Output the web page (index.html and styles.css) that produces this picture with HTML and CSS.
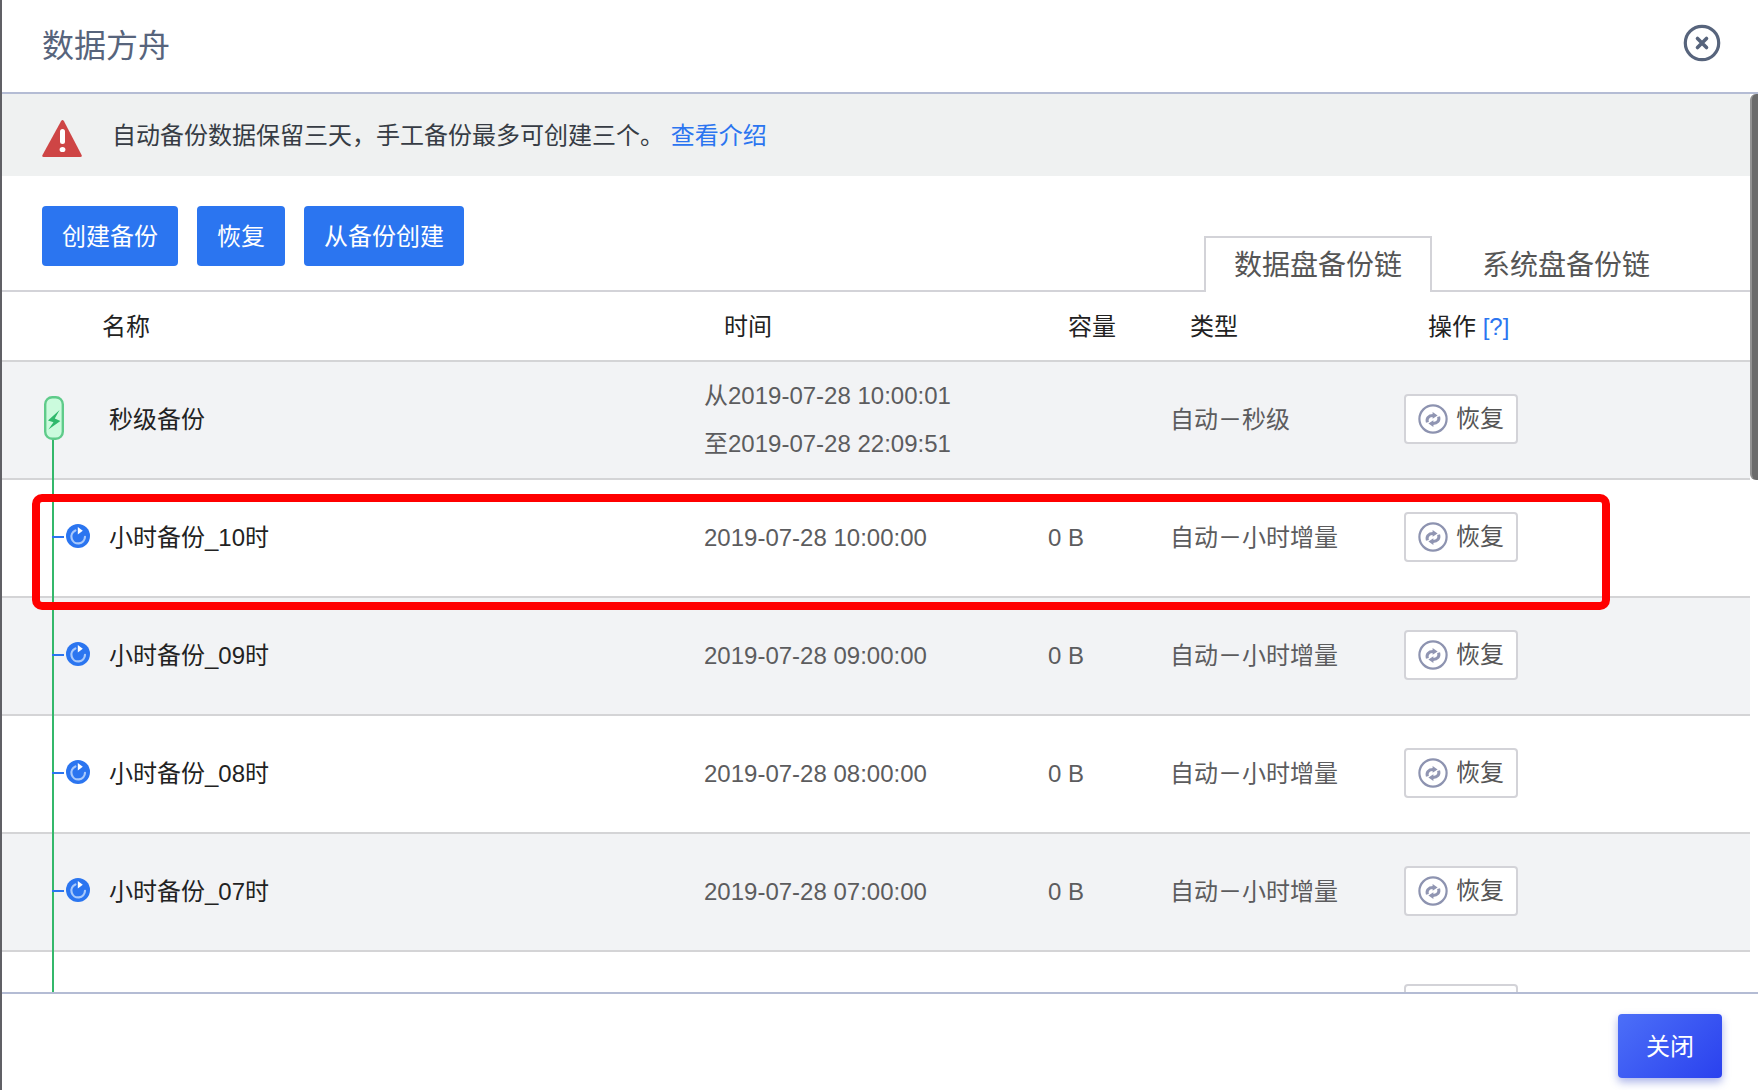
FILE: index.html
```html
<!DOCTYPE html>
<html lang="zh-CN">
<head>
<meta charset="utf-8">
<meta name="viewport" content="width=device-width, initial-scale=1">
<title>数据方舟</title>
<link rel="stylesheet" href="styles.css">
</head>
<body>
<svg class="sprite" aria-hidden="true">
  <symbol id="i-restore" viewBox="0 0 30 30">
    <circle cx="15" cy="15" r="13.6" fill="none" stroke="#8d93b0" stroke-width="2.2"/>
    <path d="M9.4 18.4c-1.2-4 1.2-6.8 5.6-6.8M20.6 12.6c1.2 4-1.2 6.8-5.6 6.8" fill="none" stroke="#9095b2" stroke-width="3"/>
    <path d="M14.6 8l5 3.6-5 3.2zM15.4 16.2l-5 3.2 5 3.6z" fill="#9095b2"/>
  </symbol>
  <symbol id="i-hour" viewBox="0 0 24 24">
    <circle cx="12" cy="12" r="12" fill="#2b75f0"/>
    <path d="M9.4 6.4A6.8 6.8 0 1 0 19 12.8" fill="none" stroke="#a9c9fb" stroke-width="2.2" stroke-linecap="round"/>
    <path d="M11.8 3l5 3.8-5 3.8z" fill="#fff"/>
  </symbol>
</svg>
<main class="dialog">
  <header class="dialog-head">
    <h1 class="dialog-title">数据方舟</h1>
    <button class="icon-close" type="button" aria-label="关闭窗口">
      <svg width="38" height="38" viewBox="0 0 38 38"><circle cx="19" cy="19" r="16.7" fill="none" stroke="#57647c" stroke-width="3.2"/><path d="M14.5 14.5l9 9M23.5 14.5l-9 9" stroke="#57647c" stroke-width="3.6" stroke-linecap="round"/></svg>
    </button>
  </header>

  <div class="dialog-body">
    <div class="content">
      <p class="notice">
        <svg class="notice-icon" width="40" height="40" viewBox="0 0 40 40"><path d="M19 2.2q1.5-2.4 3 0L39.6 36q.8 2-1.4 2H1.6Q-.4 38 .5 36z" fill="#ce4545"/><rect x="18" y="10" width="5" height="15" rx="2.5" fill="#fff"/><ellipse cx="20.5" cy="30.5" rx="2.9" ry="2.6" fill="#fff"/></svg>
        <span>自动备份数据保留三天，手工备份最多可创建三个。 <a class="link" href="#intro">查看介绍</a></span>
      </p>

      <div class="toolbar">
        <div class="actions">
          <button class="btn" type="button">创建备份</button>
          <button class="btn" type="button">恢复</button>
          <button class="btn" type="button">从备份创建</button>
        </div>
        <div class="tabs" role="tablist">
          <button class="tab tab-active" type="button" role="tab" aria-selected="true">数据盘备份链</button>
          <button class="tab" type="button" role="tab" aria-selected="false">系统盘备份链</button>
        </div>
      </div>

      <table class="backups">
        <colgroup><col><col class="col-time"><col class="col-size"><col class="col-type"><col class="col-ops"></colgroup>
        <thead>
          <tr><th class="th-name">名称</th><th>时间</th><th>容量</th><th>类型</th><th>操作 <a class="link" href="#help">[?]</a></th></tr>
        </thead>
        <tbody>
          <tr class="first">
            <td class="chain"><div class="name name-second"><svg width="20" height="44" viewBox="0 0 20 44"><rect x="1.2" y="1.2" width="17.6" height="41.6" rx="7" fill="#cbfbdd" stroke="#5fcb8a" stroke-width="2.4"/><path d="M15.6 14L4 24.5l5.5 1.8L4.4 33.5 16.4 25l-5.6-2.6z" fill="#2fb96c"/></svg>秒级备份</div></td>
            <td>从2019-07-28 10:00:01<br>至2019-07-28 22:09:51</td>
            <td></td>
            <td>自动－秒级</td>
            <td class="ops"><button class="restore" type="button"><svg width="30" height="30"><use href="#i-restore"/></svg>恢复</button></td>
          </tr>
          <tr>
            <td class="chain"><div class="name name-hour"><svg width="24" height="24"><use href="#i-hour"/></svg>小时备份_10时</div></td>
            <td>2019-07-28 10:00:00</td>
            <td>0 B</td>
            <td>自动－小时增量</td>
            <td class="ops"><button class="restore" type="button"><svg width="30" height="30"><use href="#i-restore"/></svg>恢复</button><span class="frame"></span></td>
          </tr>
          <tr>
            <td class="chain"><div class="name name-hour"><svg width="24" height="24"><use href="#i-hour"/></svg>小时备份_09时</div></td>
            <td>2019-07-28 09:00:00</td>
            <td>0 B</td>
            <td>自动－小时增量</td>
            <td class="ops"><button class="restore" type="button"><svg width="30" height="30"><use href="#i-restore"/></svg>恢复</button></td>
          </tr>
          <tr>
            <td class="chain"><div class="name name-hour"><svg width="24" height="24"><use href="#i-hour"/></svg>小时备份_08时</div></td>
            <td>2019-07-28 08:00:00</td>
            <td>0 B</td>
            <td>自动－小时增量</td>
            <td class="ops"><button class="restore" type="button"><svg width="30" height="30"><use href="#i-restore"/></svg>恢复</button></td>
          </tr>
          <tr>
            <td class="chain"><div class="name name-hour"><svg width="24" height="24"><use href="#i-hour"/></svg>小时备份_07时</div></td>
            <td>2019-07-28 07:00:00</td>
            <td>0 B</td>
            <td>自动－小时增量</td>
            <td class="ops"><button class="restore" type="button"><svg width="30" height="30"><use href="#i-restore"/></svg>恢复</button></td>
          </tr>
          <tr>
            <td class="chain"></td>
            <td></td>
            <td></td>
            <td></td>
            <td class="ops"><button class="restore restore-empty" type="button" aria-label="恢复"></button></td>
          </tr>
        </tbody>
      </table>
    </div>
    <div class="scrollbar"><div class="thumb"></div></div>
  </div>

  <footer class="dialog-foot">
    <button class="btn-close" type="button">关闭</button>
  </footer>
</main>
</body>
</html>
```
FILE: styles.css
```css
* { box-sizing: border-box; }

body {
  margin: 0;
  padding-left: 2px;
  background: #606065;
  font-family: "Liberation Sans", "Noto Sans CJK SC", sans-serif;
  font-size: 24px;
  color: #222;
}

button { font: inherit; cursor: pointer; }
svg { display: block; flex: none; }
.sprite { position: absolute; width: 0; height: 0; }
.link { color: #2b75f0; text-decoration: none; }

.dialog {
  display: flex;
  flex-direction: column;
  height: 100vh;
  background: #fff;
}

.dialog-head {
  display: flex;
  justify-content: space-between;
  align-items: flex-end;
  padding: 22px 37px 22px 40px;
  border-bottom: 2px solid #b4bcd4;
}
.dialog-title {
  margin: 0;
  font-size: 32px;
  font-weight: 400;
  line-height: 48px;
  color: #57647c;
}
.icon-close { padding: 0 0 8px; border: 0; background: none; }

.dialog-body {
  display: flex;
  flex: 1;
  min-height: 0;
}
.content {
  flex: 1;
  min-width: 0;
  overflow: hidden;
}
.scrollbar { width: 8px; }
.thumb {
  height: 43%;
  border-left: 2px solid #929292;
  border-radius: 6px 0 0 6px;
  background: #6b6b6b;
}

.notice {
  display: flex;
  align-items: center;
  gap: 30px;
  height: 82px;
  margin: 0;
  padding: 0 0 4px 40px;
  background: #eff1f1;
  color: #363c44;
}
.notice-icon { margin-top: 12px; }

.toolbar {
  display: flex;
  justify-content: space-between;
  align-items: flex-end;
  padding: 30px 70px 0 40px;
  border-bottom: 2px solid #d3d3d8;
}
.actions {
  display: flex;
  gap: 19px;
  padding-bottom: 24px;
}
.btn {
  height: 60px;
  padding: 0 20px 4px;
  border: 0;
  border-radius: 4px;
  background: #2b75f0;
  color: #fff;
}
.tabs {
  display: flex;
  gap: 20px;
  margin-bottom: -2px;
}
.tab {
  height: 56px;
  padding: 0 28px 4px;
  border: 2px solid transparent;
  border-bottom: 0;
  background: none;
  font-size: 28px;
  color: #555;
}
.tab-active {
  border-color: #d3d3d8;
  background: #fff;
}

.backups {
  width: 100%;
  table-layout: fixed;
  border-spacing: 0;
}
.col-time { width: 344px; }
.col-size { width: 122px; }
.col-type { width: 234px; }
.col-ops { width: 366px; }

.backups th {
  height: 70px;
  padding: 0 0 4px 40px;
  border-bottom: 2px solid #d4d4d6;
  font-weight: 400;
  text-align: left;
}
.backups .th-name { padding-left: 100px; }
.backups th:last-child { padding-left: 44px; }
.backups td {
  height: 118px;
  padding: 0 0 0 20px;
  border-bottom: 2px solid #d4d4d6;
  line-height: 48px;
  color: #5c5c5e;
}
.backups .ops { padding-bottom: 2px; }
.backups tbody tr { position: relative; }
.backups tbody tr:nth-child(odd) { background: #f2f3f5; }

/* the green line that links each backup to the next */
.backups .chain {
  position: relative;
  padding-left: 0;
  color: #222;
}
.chain::before {
  content: "";
  position: absolute;
  top: 0;
  bottom: -2px;
  left: 50px;
  width: 2px;
  background: #34b86b;
}
.first .chain::before { top: 78px; }

.name {
  position: relative;
  display: flex;
  align-items: center;
}
.name svg { margin-bottom: 4px; }
.name-second { gap: 45px; padding-left: 42px; }
.name-hour { gap: 19px; padding-left: 64px; }
.name-hour::before {
  content: "";
  position: absolute;
  top: 22px;
  left: 50px;
  width: 12px;
  height: 2px;
  background: #2b75f0;
}

/* highlight frame over the selected backup */
.frame {
  position: absolute;
  z-index: 2;
  top: 14px;
  right: 140px;
  bottom: -12px;
  left: 30px;
  border: 8px solid #f00;
  border-radius: 10px;
  pointer-events: none;
}

.restore {
  display: flex;
  align-items: center;
  gap: 8px;
  height: 50px;
  padding: 0 12px;
  border: 2px solid #d3d3d8;
  border-radius: 4px;
  background: #fff;
  color: #555;
}
.restore-empty { width: 114px; }

.dialog-foot {
  display: flex;
  justify-content: flex-end;
  padding: 20px 36px 12px;
  border-top: 2px solid #b4bcd4;
}
.btn-close {
  height: 64px;
  padding: 0 28px 4px;
  border: 0;
  border-radius: 4px;
  background: linear-gradient(135deg, #4c6ff8, #2a41ee);
  box-shadow: 0 4px 8px rgba(42, 65, 200, .4);
  color: #fff;
}
```
